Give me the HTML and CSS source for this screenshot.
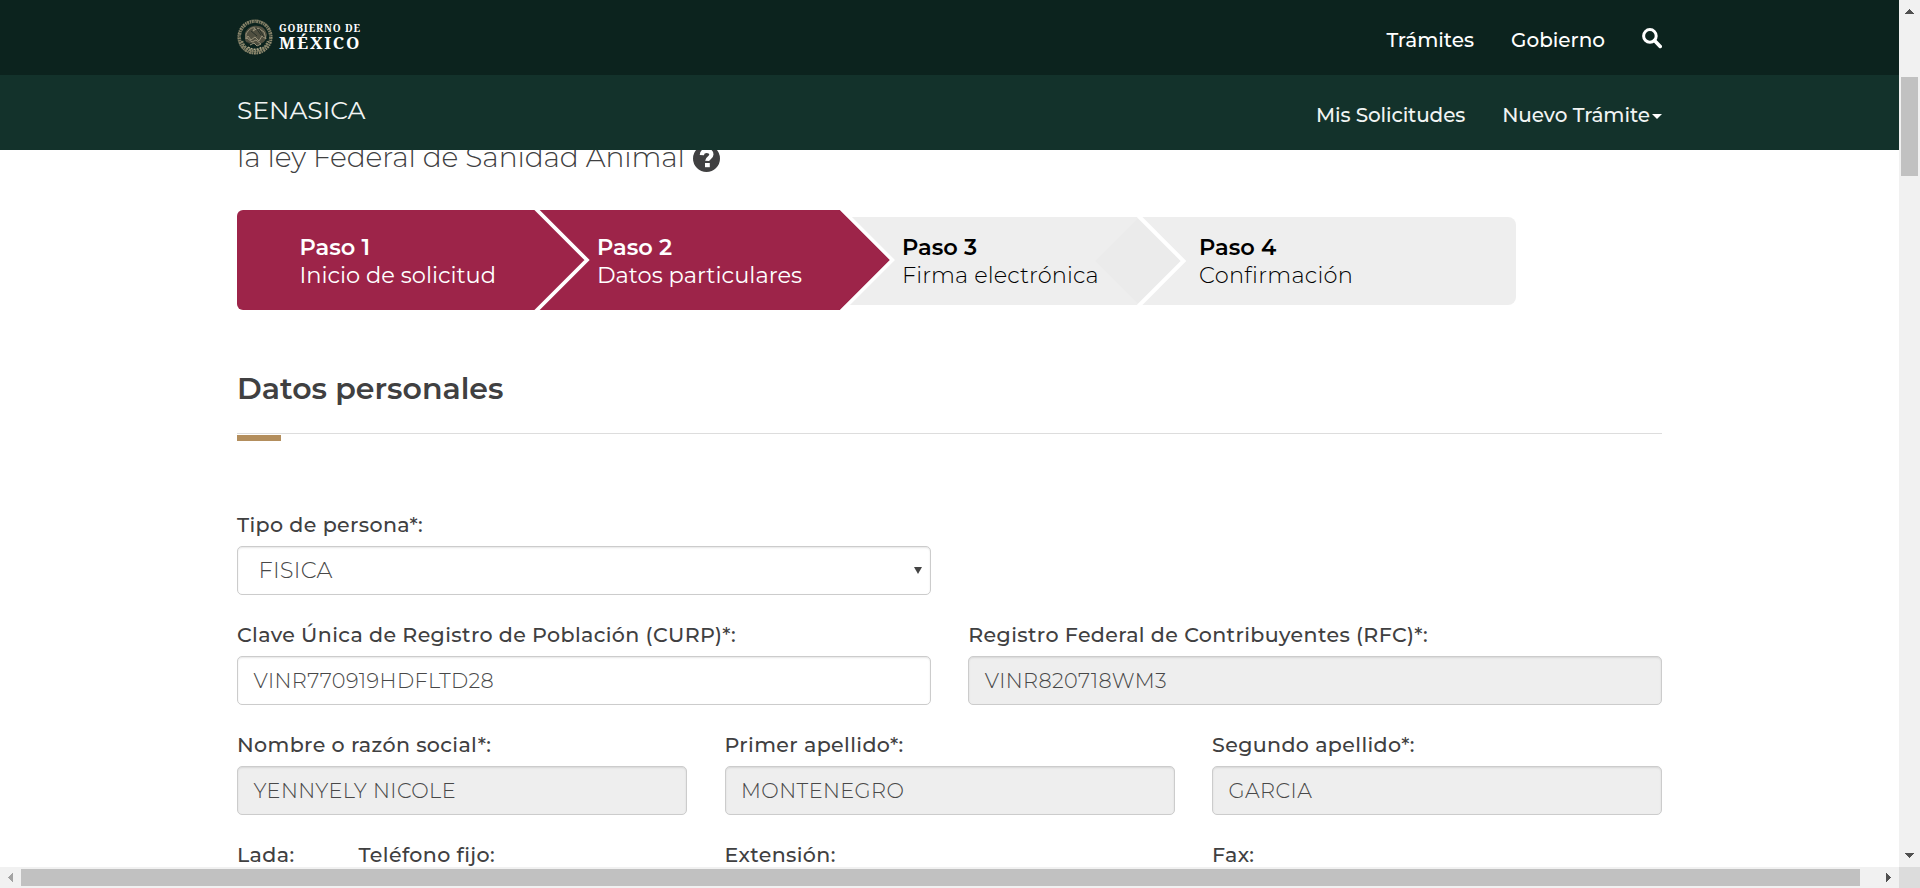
FILE: index.html
```
<!DOCTYPE html>
<html lang="es">
<head>
<meta charset="utf-8">
<title>SENASICA</title>
<link rel="stylesheet" href="styles.css">
</head>
<body>
<div class="window">
  <div class="viewport">
    <header class="site-header">
      <div class="bar bar-gov">
        <div class="container bar-inner">
          <a class="logo">
            <svg class="seal" width="36" height="36" viewBox="0 0 36 36" fill="none">
              <circle cx="18" cy="18" r="15.8" stroke="#7d7a62" stroke-width="3.6" stroke-dasharray="2.1 .7 1.3 .6"/>
              <circle cx="18" cy="18" r="16.6" stroke="#aca587" stroke-width="1.2" stroke-dasharray="1 1.6" opacity=".6"/>
              <path d="M5 22a13.500 13.500 0 0 0 26 0" stroke="#89866b" stroke-width="2.400" stroke-dasharray="2 .8"/>
              <path d="M8 14c3-6 8-8 13-7 5 0 8 4 9 9-1 4-2 7-5 8-3 3-7 2-10 0-4 1-7-1-7-4z" fill="#504f40"/>
              <path d="M9 15c3-5 6-7 9-6l-2 3 5-3 6 4 2 7-4-3-3 5-4-4-4 3-3-4-2 3zM10 19l5 4 4-2 5 4M13 26l4-2 3 3 4-2" stroke="#99927a" stroke-width="1"/>
              <path d="M19 9l5 7M22 10l5 8M14 12l6 5M10 23l3 2" stroke="#293129" stroke-width="1"/>
              <path d="M11 28c4 3 10 3 14 0" stroke="#b3ab8c" stroke-width="1.500" stroke-dasharray="2 1"/>
            </svg>
            <span class="logo-text"><span class="logo-top">GOBIERNO DE</span><span class="logo-bottom">MÉXICO</span></span>
          </a>
          <nav class="nav">
            <a class="nav-link">Trámites</a>
            <a class="nav-link">Gobierno</a>
            <svg class="search" width="20" height="21" viewBox="0 0 20 21" fill="none" stroke="#fff">
              <circle cx="7.900" cy="7.900" r="6.300" stroke-width="3"/>
              <path d="M12.500 12.500l5.700 5.900" stroke-width="3.600" stroke-linecap="round"/>
            </svg>
          </nav>
        </div>
      </div>
      <div class="bar bar-site">
        <div class="container bar-inner">
          <a class="brand">SENASICA</a>
          <nav class="nav">
            <a class="nav-link nav-soft">Mis Solicitudes</a>
            <a class="nav-link nav-soft nav-drop">Nuevo Trámite<span class="caret"></span></a>
          </nav>
        </div>
      </div>
    </header>
    <main class="container main">
      <h2 class="page-title"><span>la ley Federal de Sanidad Animal</span>
        <svg class="help" width="27" height="27" viewBox="0 0 27 27">
          <circle cx="13.500" cy="13.500" r="13.500" fill="#404041"/>
          <path d="M8.800 10.200c.2-3 2-4.400 4.900-4.400 2.800 0 4.700 1.300 4.700 3.800 0 3.400-4 3.100-4.200 6.300" fill="none" stroke="#fff" stroke-width="4.200"/>
          <path d="M12 18h4.800v4.200H12z" fill="#fff"/>
        </svg>
      </h2>
      <div class="progress">
        <ol class="steps">
          <li class="step step-1 done"><b>Paso 1</b><span>Inicio de solicitud</span></li>
          <li class="step step-2 done"><b>Paso 2</b><span>Datos particulares</span></li>
          <li class="step step-3"><b>Paso 3</b><span>Firma electrónica</span></li>
          <li class="step step-4"><b>Paso 4</b><span>Confirmación</span></li>
        </ol>
        <svg class="arrows" width="1280" height="106" viewBox="0 0 1280 106">
          <path d="M902 10l-44 44 44 44 44-44z" fill="#000" fill-opacity=".012"/>
          <g fill="none" stroke="#fff">
            <path d="M901.500 9l45 45-45 45" stroke-width="4"/>
            <path d="M298 1l52 52-52 52" stroke-width="3.800"/>
            <path d="M604.500 2l51 51-51 51" stroke-width="3.500"/>
          </g>
        </svg>
      </div>
      <h3 class="section-title">Datos personales</h3>
      <form class="form">
        <div class="row">
          <div class="col half"><label>Tipo de persona*:</label><div class="control select">FISICA<span class="select-arrow"></span></div></div>
        </div>
        <div class="row">
          <div class="col half"><label>Clave Única de Registro de Población (CURP)*:</label><div class="control">VINR770919HDFLTD28</div></div>
          <div class="col half"><label>Registro Federal de Contribuyentes (RFC)*:</label><div class="control locked">VINR820718WM3</div></div>
        </div>
        <div class="row">
          <div class="col"><label>Nombre o razón social*:</label><div class="control locked">YENNYELY NICOLE</div></div>
          <div class="col"><label>Primer apellido*:</label><div class="control locked">MONTENEGRO</div></div>
          <div class="col"><label>Segundo apellido*:</label><div class="control locked">GARCIA</div></div>
        </div>
        <div class="row">
          <div class="col phone"><label>Lada:</label><label>Teléfono fijo:</label></div>
          <div class="col"><label>Extensión:</label></div>
          <div class="col"><label>Fax:</label></div>
        </div>
      </form>
    </main>
  </div>
  <div class="scroll-y">
    <svg width="9" height="5" viewBox="0 0 9 5" shape-rendering="crispEdges"><path d="M0 5l4.500-5L9 5z" fill="#505050"/></svg>
    <div class="thumb-y"></div>
    <svg class="down" width="9" height="5" viewBox="0 0 9 5" shape-rendering="crispEdges"><path d="M0 0l4.500 5L9 0z" fill="#505050"/></svg>
  </div>
  <div class="scroll-x">
    <svg width="5" height="9" viewBox="0 0 5 9" shape-rendering="crispEdges"><path d="M5 0L0 4.500 5 9z" fill="#a3a3a3"/></svg>
    <div class="thumb-x"></div>
    <svg class="right" width="5" height="9" viewBox="0 0 5 9" shape-rendering="crispEdges"><path d="M0 0l5 4.500L0 9z" fill="#505050"/></svg>
  </div>
  <div class="corner"></div>
</div>
</body>
</html>
```
FILE: styles.css
```
* { box-sizing: border-box; }
body { margin: 0; font-family: "Montserrat", "Inter", sans-serif; color: #404041; background: #fff; overflow: hidden; }
.window { display: grid; grid-template: 867px 21px / 1899px 21px; height: 888px; overflow: hidden; }
.viewport { overflow: hidden; background: #fff; }
.container { width: 1425px; margin-left: 237px; }

/* Header */
.site-header { position: relative; z-index: 1; }
.bar { height: 75px; }
.bar-gov { background: #0c231e; }
.bar-site { background: #13322b; }
.bar-inner { display: flex; justify-content: space-between; height: 75px; }
.logo { display: flex; gap: 6px; padding-top: 19px; }
.logo-text { display: flex; flex-direction: column; padding-top: 3px; color: #fff; font-family: "Noto Serif", "DejaVu Serif", "Liberation Serif", serif; font-weight: 700; }
.logo-top { font-size: 10px; line-height: 12px; letter-spacing: .85px; }
.logo-bottom { font-size: 17px; line-height: 17px; letter-spacing: 1.800px; }
.nav { display: flex; align-items: flex-start; }
.nav-link { color: #fff; font-weight: 500; font-size: 20px; line-height: 24px; white-space: nowrap; padding-top: 28px; margin-left: 37px; }
.nav-soft { color: #f1f4f3; letter-spacing: -.12px; }
.nav-drop { display: flex; letter-spacing: -.04px; }
.caret { border: 5px solid transparent; border-top-color: #fff; border-bottom: 0; margin: 11px 0 0 2px; height: 5px; }
.search { margin: 28px 0 0 37px; }
.brand { color: #f1f4f3; font-size: 25px; line-height: 30px; padding-top: 20px; }

/* Title, partly scrolled under the header */
.page-title { display: flex; align-items: flex-start; gap: 8px; height: 60px; margin: -11px 0 0; font-weight: 300; font-size: 28.125px; line-height: 36px; letter-spacing: -.12px; white-space: nowrap; }
.help { margin-top: 6px; }

/* Steps */
.progress { position: relative; height: 106px; margin-top: 8px; }
.steps { display: flex; align-items: flex-start; list-style: none; width: 1279px; margin: 0; padding: 3px 0 0; }
.step { display: flex; flex-direction: column; height: 88px; padding: 16px 0 0 62px; margin-top: 7px; background: #eee; color: #000; font-weight: 300; font-size: 22.500px; line-height: 28px; letter-spacing: .1px; white-space: nowrap; }
.step b { font-weight: 600; letter-spacing: 0; }
.step.step-1 { width: 303px; padding-left: 62.500px; border-radius: 6px 0 0 6px; }
.step.step-2 { width: 350px; padding-left: 57px; clip-path: polygon(0 0, 300px 0, 350px 50px, 300px 100px, 0 100px); }
.step.done { height: 100px; margin-top: 0; padding-top: 23px; background: #9d2449; color: #fff; font-weight: 400; letter-spacing: 0; }
.step-3 { width: 298px; margin-left: -50px; }
.step-4 { width: 378px; border-radius: 0 8px 8px 0; padding-left: 61px; letter-spacing: .3px; }
.arrows { position: absolute; left: 0; top: 0; }

.section-title { position: relative; margin: 56px 0 0; height: 65px; border-bottom: 1px solid #ddd; font-weight: 600; font-size: 30px; line-height: 40px; }
.section-title::after { content: ""; position: absolute; left: 0; top: 66px; width: 44px; height: 6px; background: #b38e5d; }

/* Form */
.form { margin-top: 78px; }
.row { display: flex; gap: 37.500px; height: 110px; }
.col { width: 450px; flex: none; }
.half { width: 693.750px; }
label { display: block; font-weight: 500; font-size: 20.600px; line-height: 26px; letter-spacing: .37px; white-space: nowrap; margin-bottom: 8px; }
.control { height: 49px; border: 1px solid #ccc; border-radius: 5px; padding: 0 15.500px; font-weight: 300; font-size: 20.800px; line-height: 47px; letter-spacing: .42px; color: #484848; box-shadow: inset 0 1px 2px rgba(0,0,0,.1); }
.locked { background: #eee; }
.select { position: relative; padding-left: 20.500px; font-size: 22.500px; letter-spacing: .25px; }
.select-arrow { position: absolute; right: 8px; top: 20px; border: 4px solid transparent; border-top: 7px solid #444; border-bottom: 0; }
.phone { display: grid; grid-template-columns: 121.500px 1fr; }

/* Scroll bars */
.scroll-y { display: flex; flex-direction: column; align-items: center; background: #f1f1f1; padding: 9px 0; }
.thumb-y { width: 17px; height: 99px; margin-top: 63px; background: #c1c1c1; }
.down { margin-top: auto; }
.scroll-x { display: flex; align-items: center; background: #f1f1f1; padding: 0 8px; }
.thumb-x { width: 1839px; height: 17px; margin-left: 8px; background: #c1c1c1; }
.right { margin-left: auto; }
.corner { background: #dcdcdc; }
```
